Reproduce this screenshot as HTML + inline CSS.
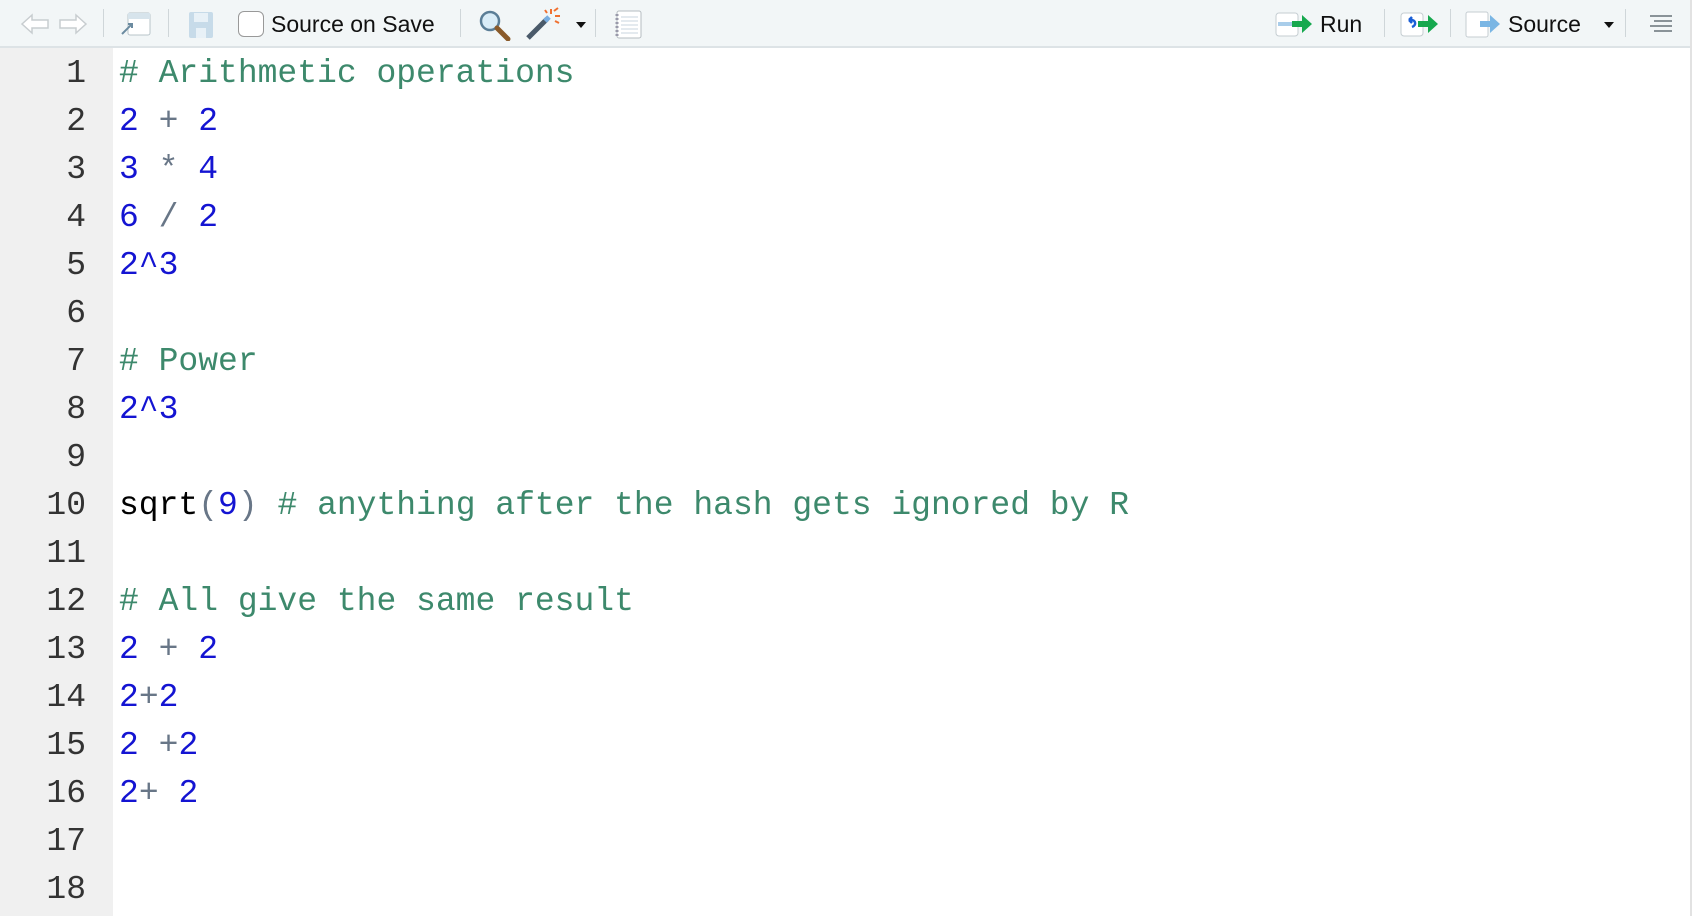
<!DOCTYPE html>
<html><head><meta charset="utf-8"><style>
html,body{margin:0;padding:0;width:1702px;height:916px;overflow:hidden;background:#fff;}
#tb{position:absolute;left:0;top:0;width:1690px;height:46px;background:#f2f6f7;border-bottom:2px solid #dde3e6;font-family:"Liberation Sans",sans-serif;}
.sep{position:absolute;top:9px;width:1px;height:28px;background:#cfd6d9;}
.t{position:absolute;top:11px;font-size:23px;color:#111;}
#gut{position:absolute;left:0;top:48px;width:113px;height:868px;background:#f0f0f0;}
#vs{position:absolute;left:1690px;top:0;width:2px;height:916px;background:#e2e2e2;}
.ln{position:absolute;left:0;width:86px;text-align:right;font-family:"Liberation Mono",monospace;font-size:33px;color:#333;line-height:48px;margin-top:2px;}
.cd{position:absolute;left:119px;font-family:"Liberation Mono",monospace;font-size:33px;line-height:48px;white-space:pre;color:#000;margin-top:2px;}
.c{color:#3d896c}.n{color:#1414d2}.o{color:#687687}
</style></head><body>
<div id="tb">
 <svg style="position:absolute;left:20px;top:12px" width="70" height="24"><path d="M2 12 L12 3 V8 H28 V16 H12 V21 Z" fill="#fff" stroke="#c8cdd0" stroke-width="1.5"/><path d="M66 12 L56 3 V8 H40 V16 H56 V21 Z" fill="#fff" stroke="#c8cdd0" stroke-width="1.5"/></svg>
 <div class="sep" style="left:103px"></div>
 <svg style="position:absolute;left:118px;top:10px" width="36" height="28"><rect x="10" y="3" width="22" height="22" rx="2" fill="#fff" stroke="#b8c4ca"/><rect x="10" y="3" width="22" height="6" fill="#d7e4ec"/><path d="M4 24 L14 14 M10 14 H14 V18" stroke="#6b8ba0" stroke-width="2" fill="none"/></svg>
 <div class="sep" style="left:168px"></div>
 <svg style="position:absolute;left:188px;top:11px" width="28" height="28"><rect x="1" y="1" width="24" height="26" rx="2" fill="#c7dbe9"/><rect x="6" y="2" width="14" height="9" fill="#e8f1f7"/><rect x="8" y="17" width="10" height="10" fill="#e8f1f7"/></svg>
 <div style="position:absolute;left:238px;top:11px;width:24px;height:24px;border:1.5px solid #999;border-radius:6px;background:#fff"></div>
 <div class="t" style="left:271px">Source on Save</div>
 <div class="sep" style="left:460px"></div>
 <svg style="position:absolute;left:478px;top:9px" width="34" height="32"><circle cx="12" cy="12" r="9" fill="#d9ecf7" stroke="#5a7d96" stroke-width="2.5"/><path d="M19 19 L30 30" stroke="#8a5a2a" stroke-width="5" stroke-linecap="round"/></svg>
 <svg style="position:absolute;left:525px;top:7px" width="36" height="34"><path d="M3 31 L22 12" stroke="#4a5a6a" stroke-width="5"/><path d="M20 14 L24 10" stroke="#7aaee0" stroke-width="5"/><path d="M26 2 V7 M30 9 H35 M29 4 L33 1 M30 14 L34 16 M22 6 L20 3" stroke="#f07030" stroke-width="2"/></svg>
 <svg style="position:absolute;left:575px;top:21px" width="12" height="8"><path d="M1 1 H11 L6 7 Z" fill="#111"/></svg>
 <div class="sep" style="left:595px"></div>
 <svg style="position:absolute;left:614px;top:10px" width="30" height="30"><rect x="3" y="1" width="24" height="27" rx="2" fill="#fff" stroke="#b5bcc0"/><path d="M7 7H24M7 11H24M7 15H24M7 19H24M7 23H24" stroke="#c9d6df"/><path d="M3 4v22" stroke="#99a" stroke-dasharray="2 2" stroke-width="3"/></svg>
 <svg style="position:absolute;left:1275px;top:11px" width="40" height="27"><rect x="1" y="2" width="22" height="23" rx="3" fill="#fff" stroke="#c5cdd2"/><path d="M3 13 H17" stroke="#a9cdea" stroke-width="4"/><path d="M17 10 H27 V4 L37 13 L27 22 V16 H17 Z" fill="#16a84e"/></svg>
 <div class="t" style="left:1320px">Run</div>
 <div class="sep" style="left:1384px"></div>
 <svg style="position:absolute;left:1400px;top:11px" width="42" height="27"><rect x="1" y="2" width="22" height="23" rx="3" fill="#fff" stroke="#c5cdd2"/><path d="M12 16 C17 14 16 8 9 9 M9 9 L12 6 M9 9 L12 12" stroke="#1a5fd6" stroke-width="2.5" fill="none"/><path d="M18 10 H28 V4 L38 13 L28 22 V16 H18 Z" fill="#16a84e"/></svg>
 <div class="sep" style="left:1450px"></div>
 <svg style="position:absolute;left:1465px;top:10px" width="42" height="29"><rect x="1" y="2" width="22" height="25" rx="2" fill="#fff" stroke="#c5cdd2"/><path d="M15 11 H25 V5 L35 14 L25 23 V17 H15 Z" fill="#7ab6e4"/></svg>
 <div class="t" style="left:1508px">Source</div>
 <svg style="position:absolute;left:1603px;top:21px" width="12" height="8"><path d="M1 1 H11 L6 7 Z" fill="#111"/></svg>
 <div class="sep" style="left:1625px"></div>
 <svg style="position:absolute;left:1648px;top:14px" width="26" height="20"><path d="M2 2H24M6 7H24M2 12H24M6 17H24" stroke="#8a9398" stroke-width="2"/></svg>
</div>
<div id="gut"></div>
<div id="vs"></div>
<div class="ln" style="top:48px">1</div><div class="cd c" style="top:48px"># Arithmetic operations</div>
<div class="ln" style="top:96px">2</div><div class="cd" style="top:96px"><span class="n">2</span> <span class="o">+</span> <span class="n">2</span></div>
<div class="ln" style="top:144px">3</div><div class="cd" style="top:144px"><span class="n">3</span> <span class="o">*</span> <span class="n">4</span></div>
<div class="ln" style="top:192px">4</div><div class="cd" style="top:192px"><span class="n">6</span> <span class="o">/</span> <span class="n">2</span></div>
<div class="ln" style="top:240px">5</div><div class="cd n" style="top:240px">2^3</div>
<div class="ln" style="top:288px">6</div>
<div class="ln" style="top:336px">7</div><div class="cd c" style="top:336px"># Power</div>
<div class="ln" style="top:384px">8</div><div class="cd n" style="top:384px">2^3</div>
<div class="ln" style="top:432px">9</div>
<div class="ln" style="top:480px">10</div><div class="cd" style="top:480px">sqrt<span class="o">(</span><span class="n">9</span><span class="o">)</span> <span class="c"># anything after the hash gets ignored by R</span></div>
<div class="ln" style="top:528px">11</div>
<div class="ln" style="top:576px">12</div><div class="cd c" style="top:576px"># All give the same result</div>
<div class="ln" style="top:624px">13</div><div class="cd" style="top:624px"><span class="n">2</span> <span class="o">+</span> <span class="n">2</span></div>
<div class="ln" style="top:672px">14</div><div class="cd" style="top:672px"><span class="n">2</span><span class="o">+</span><span class="n">2</span></div>
<div class="ln" style="top:720px">15</div><div class="cd" style="top:720px"><span class="n">2</span> <span class="o">+</span><span class="n">2</span></div>
<div class="ln" style="top:768px">16</div><div class="cd" style="top:768px"><span class="n">2</span><span class="o">+</span> <span class="n">2</span></div>
<div class="ln" style="top:816px">17</div>
<div class="ln" style="top:864px">18</div>
</body></html>
